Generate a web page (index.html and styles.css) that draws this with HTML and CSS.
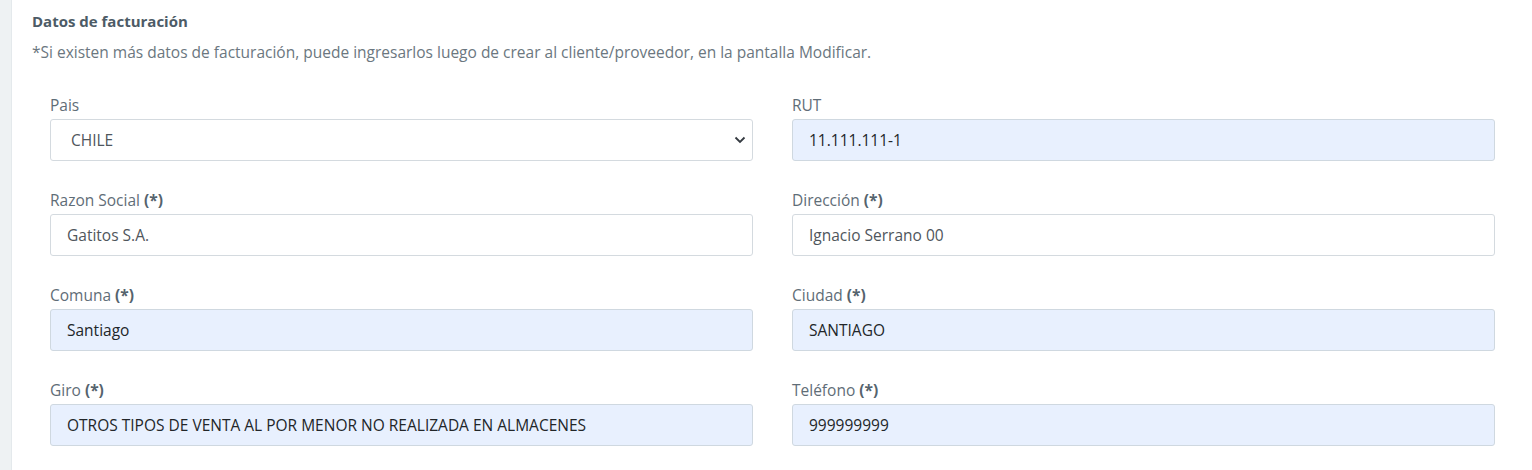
FILE: index.html
```html
<!DOCTYPE html>
<html lang="es">
<head>
<meta charset="utf-8">
<title>Datos de facturación</title>
<link rel="stylesheet" href="styles.css">
</head>
<body>
<div class="page">
  <aside class="strip"></aside>
  <main class="panel">
    <h2 class="title">Datos de facturación</h2>
    <p class="note">*Si existen más datos de facturación, puede ingresarlos luego de crear al cliente/proveedor, en la pantalla Modificar.</p>
    <div class="grid">
      <div class="field">
        <label class="label">Pais</label>
        <div class="control select">
          <span class="value muted sel">CHILE</span>
          <svg class="chev" width="12" height="8" viewBox="0 0 12 8"><path d="M1.5 1.5 L6 6 L10.5 1.5" fill="none" stroke="#343a40" stroke-width="1.8"/></svg>
        </div>
      </div>
      <div class="field">
        <label class="label">RUT</label>
        <div class="control filled"><span class="value">11.111.111-1</span></div>
      </div>
      <div class="field">
        <label class="label">Razon Social <b>(*)</b></label>
        <div class="control"><span class="value muted">Gatitos S.A.</span></div>
      </div>
      <div class="field">
        <label class="label">Dirección <b>(*)</b></label>
        <div class="control"><span class="value muted">Ignacio Serrano 00</span></div>
      </div>
      <div class="field">
        <label class="label">Comuna <b>(*)</b></label>
        <div class="control filled"><span class="value">Santiago</span></div>
      </div>
      <div class="field">
        <label class="label">Ciudad <b>(*)</b></label>
        <div class="control filled"><span class="value">SANTIAGO</span></div>
      </div>
      <div class="field">
        <label class="label">Giro <b>(*)</b></label>
        <div class="control filled"><span class="value">OTROS TIPOS DE VENTA AL POR MENOR NO REALIZADA EN ALMACENES</span></div>
      </div>
      <div class="field">
        <label class="label">Teléfono <b>(*)</b></label>
        <div class="control filled"><span class="value">999999999</span></div>
      </div>
    </div>
  </main>
</div>
</body>
</html>
```

FILE: styles.css
```css
html, body {
  margin: 0;
  padding: 0;
  background: #ffffff;
}
body {
  font-family: "Open Sans", Lato, "Liberation Sans", sans-serif;
  font-size: 15.5px;
  color: #5a6872;
}
.page {
  display: flex;
  min-height: 470px;
}
.strip {
  width: 11px;
  flex: 0 0 11px;
  background: #eef2f3;
  border-right: 1px solid #e4e9ec;
}
.panel {
  flex: 1;
  padding: 0 20px;
}
.title {
  margin: 11px 0 0;
  font-size: 15px;
  line-height: 20px;
  font-weight: 700;
  color: #4d5b66;
}
.note {
  margin: 11px 0 0;
  line-height: 20px;
  color: #6b7780;
}
.grid {
  display: grid;
  grid-template-columns: 1fr 1fr;
  column-gap: 39px;
  row-gap: 29px;
  padding: 0 17px 0 18px;
  margin-top: 33px;
}
.field {
  display: flex;
  flex-direction: column;
}
.label {
  line-height: 21px;
  margin-bottom: 3px;
  color: #5f6d77;
}
.label b {
  font-weight: 700;
  color: #55636d;
}
.control {
  height: 42px;
  box-sizing: border-box;
  border: 1px solid #d4dadf;
  border-radius: 3px;
  background: #ffffff;
  display: flex;
  align-items: center;
  padding: 0 16px;
}
.control.filled {
  background: #e8f0fe;
  border-color: #cfd8e0;
}
.value {
  color: #222629;
}
.value.muted {
  color: #4f565c;
}
.value.sel {
  padding-left: 4px;
}
.select {
  justify-content: space-between;
  padding-right: 6px;
}
.chev {
  display: block;
}
```
